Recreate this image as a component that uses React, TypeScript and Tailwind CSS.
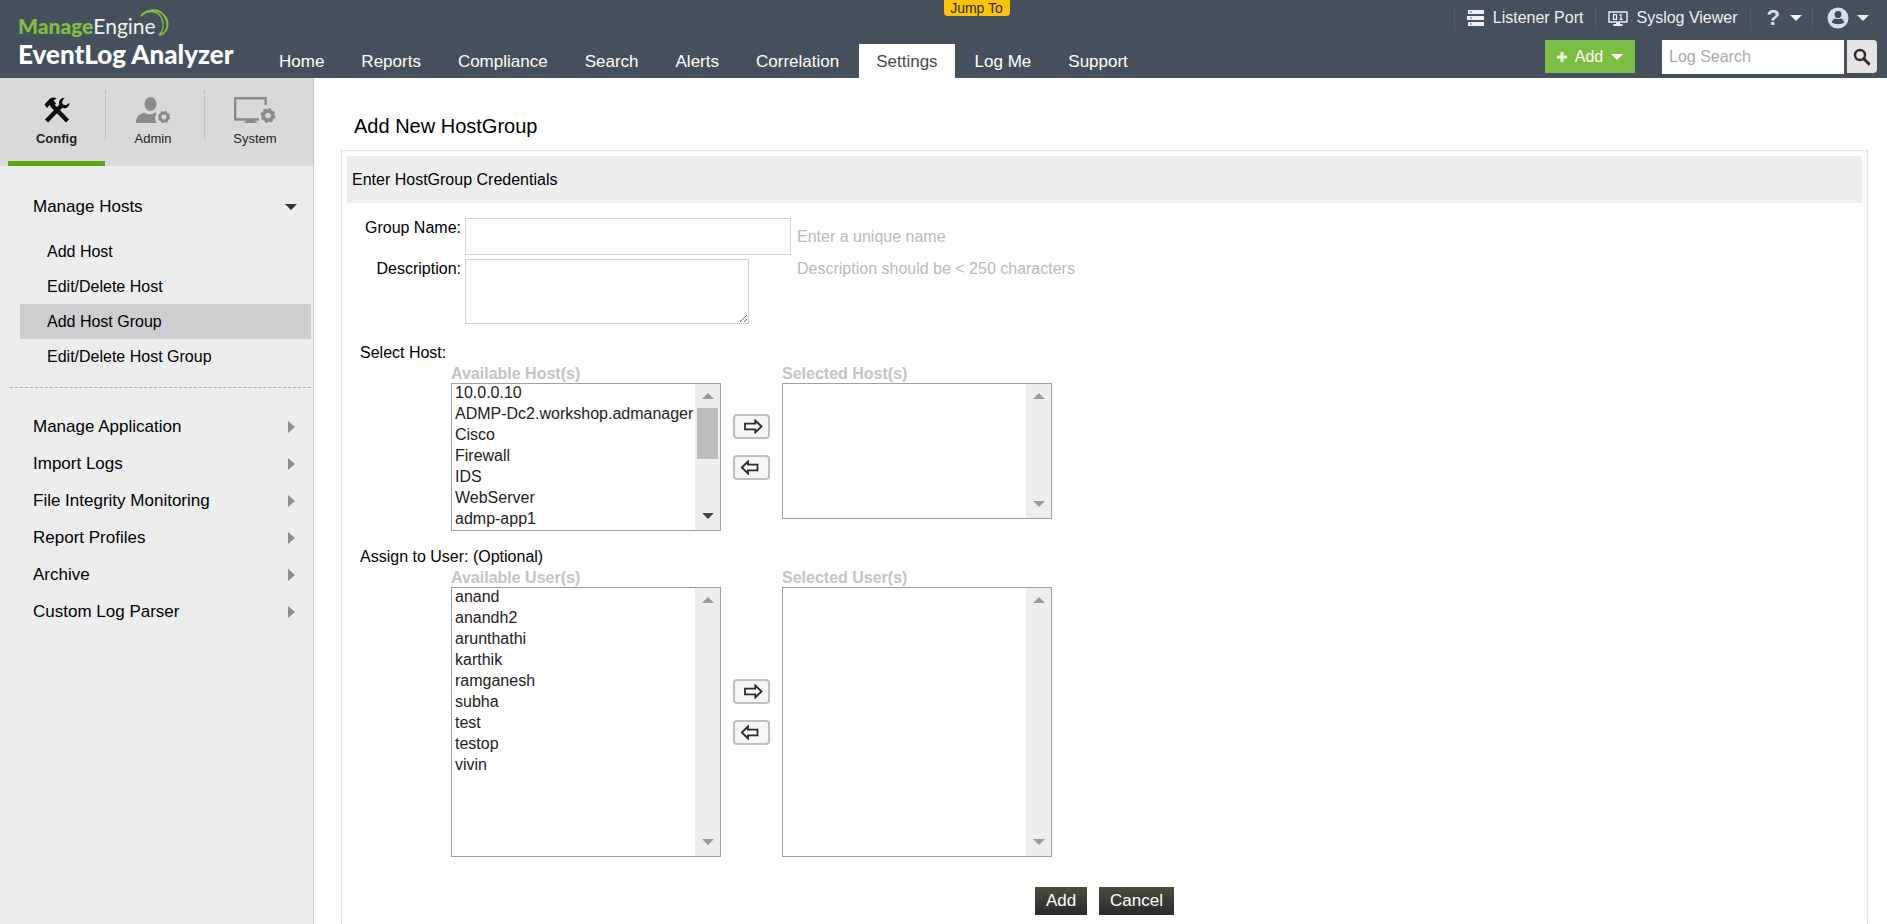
import React, { useState } from 'react';

const NAV_ITEMS = ['Home', 'Reports', 'Compliance', 'Search', 'Alerts', 'Correlation', 'Settings', 'Log Me', 'Support'];
const HOST_LINKS = ['Add Host', 'Edit/Delete Host', 'Add Host Group', 'Edit/Delete Host Group'];
const MENU_LINKS = ['Manage Application', 'Import Logs', 'File Integrity Monitoring', 'Report Profiles', 'Archive', 'Custom Log Parser'];
const HOSTS = ['10.0.0.10', 'ADMP-Dc2.workshop.admanager', 'Cisco', 'Firewall', 'IDS', 'WebServer', 'admp-app1', 'admp-app2', 'admp-dc1', 'admp-dc3', 'admp-sql'];
const USERS = ['anand', 'anandh2', 'arunthathi', 'karthik', 'ramganesh', 'subha', 'test', 'testop', 'vivin'];

function Caret({ className }: { className?: string }) {
  return (
    <svg width="12" height="6" viewBox="0 0 12 6" fill="currentColor" className={className} aria-hidden="true">
      <path d="M0 0h12L6 6z" />
    </svg>
  );
}

function ToolsIcon() {
  return (
    <svg width="26" height="26" viewBox="0 0 26 26" fill="none" stroke="#0b0b0b" aria-hidden="true">
      <path d="M8 8l15.500 16" strokeWidth="4.400" />
      <path d="M0.500 7.500L6 1.500C8 .2 10.500 .2 12.500 1.500L9.500 3.500l2.500 3L8 10.500 5.500 8 3 11z" fill="#0b0b0b" stroke="none" />
      <path d="M2.500 24L17.500 8.500" strokeWidth="4.400" />
      <path d="M20.500 .8c-3.600 0-6.200 3.200-5.300 6.700.8 2.800 3.500 4.300 6.200 3.700 2.500-.6 4.200-2.800 4.100-5.400L22 8.200l-3.200-.8-.6-3.200z" fill="#0b0b0b" stroke="none" />
    </svg>
  );
}

function AdminIcon() {
  return (
    <svg width="34" height="26" viewBox="0 0 34 26" fill="#8b8b8b" aria-hidden="true">
      <ellipse cx="14.500" cy="7" rx="6" ry="7" />
      <path d="M0 26c0-6 2.500-9 8.500-10.500 1.500 1.200 3 1.800 5 1.800 2.200 0 4-.6 5.500-1.800l1.500.5c-1.800 3-1.800 7 0 10z" />
      <circle cx="28" cy="20" r="4" fill="none" stroke="#8b8b8b" strokeWidth="3" />
      <circle cx="28" cy="20" r="5.600" fill="none" stroke="#8b8b8b" strokeWidth="1.200" strokeDasharray="2.200 2.198" />
    </svg>
  );
}

function SystemIcon() {
  return (
    <svg width="42" height="26" viewBox="0 0 42 26" fill="none" stroke="#8b8b8b" aria-hidden="true">
      <path d="M25 22.500H1.200V1.200h30.500V8" strokeWidth="2.400" />
      <path d="M10.500 26c0-1.800 1.500-2 3-2v-1.500h6V24c2 0 3.500.4 3.500 2z" fill="#8b8b8b" stroke="none" />
      <circle cx="34" cy="18.500" r="4.600" strokeWidth="3.600" />
      <circle cx="34" cy="18.500" r="6.600" strokeWidth="1.800" strokeDasharray="3 2.184" />
    </svg>
  );
}

function ServerIcon() {
  return (
    <svg width="18" height="16" viewBox="0 0 18 16" aria-hidden="true">
      <path d="M1 0h16v4H1zM0 6h17v4H0zM1 12h16v4H1z" fill="#eef0f1" />
      <path d="M3 1.500h2v1H3zM3 7.500h2v1H3zM3 13.500h2v1H3z" fill="#44515c" />
    </svg>
  );
}

function SyslogIcon() {
  return (
    <svg width="20" height="15" viewBox="0 0 20 15" fill="none" stroke="#eef0f1" aria-hidden="true">
      <path d="M1 1h18v10H1z" strokeWidth="1.400" />
      <path d="M5.500 3.700h3v4.600h-3zM11.500 4.200l1.500-.8v5M11.500 8.400h3.200" strokeWidth="1.200" />
      <path d="M8 11.500h4V13h2.500v2h-9v-2H8z" fill="#eef0f1" stroke="none" />
    </svg>
  );
}

function UserIcon() {
  return (
    <svg width="22" height="22" viewBox="0 0 22 22" aria-hidden="true">
      <circle cx="11" cy="11" r="10.500" fill="#d5dfe6" />
      <circle cx="11" cy="7.500" r="3.400" fill="#3f4e5b" />
      <path d="M4.800 15.500c.4-2.700 2.400-4 4-4 1.300.8 3 .8 4.400 0 1.600 0 3.600 1.300 4 4-3.200 2.200-9.200 2.200-12.400 0z" fill="#3f4e5b" />
    </svg>
  );
}

function Header() {
  return (
    <header className="relative flex h-[78px] shrink-0 bg-[#44515c] text-white">
      <a href="#" className="flex w-[262px] shrink-0 flex-col pl-[18px] pt-[13px]">
        <span className="relative font-['Lato',sans-serif] text-[21px] leading-[26px] text-[#f2f2f2]">
          <b className="font-black text-[#7fc142]">Manage</b>Engine
          <svg className="absolute -top-1 left-[122px]" width="30" height="28" viewBox="0 0 30 28" fill="none" stroke="#7fc142" aria-hidden="true">
            <path d="M1 7C7-1 20-1 25 8s1 16-5 18" strokeWidth="1.600" />
            <path d="M2 6C9 0 19 2 22 10s0 13-3 16" strokeWidth="1.300" />
            <path d="M4 4c8-5 20-2 23 6s-1 14-7 16" strokeWidth="1" />
          </svg>
        </span>
        <span className="whitespace-nowrap font-['Lato',sans-serif] text-[26px] font-black leading-[30px]">EventLog Analyzer</span>
      </a>

      <nav className="flex items-end gap-[3px] text-[17px]">
        {NAV_ITEMS.map((item) => (
          <a
            key={item}
            href="#"
            className={`h-[34px] whitespace-nowrap px-[17px] leading-9 ${item === 'Settings' ? 'bg-white text-[#4a4a4a]' : 'text-white'}`}
          >
            {item}
          </a>
        ))}
      </nav>

      <button className="absolute left-1/2 top-0 h-4 w-[66px] rounded-b bg-[#fdc30a] text-sm leading-4 text-[#2a2a2a]">Jump To</button>

      <div className="ml-auto flex shrink-0 flex-col items-end pr-2.5">
        <div className="flex h-10 items-start pt-1.5 text-[16px] text-[#f1f1f1]">
          <a href="#" className="flex h-6 items-center gap-2 border-l border-[#53606b] px-3">
            <ServerIcon />
            Listener Port
          </a>
          <a href="#" className="flex h-6 items-center gap-2 border-l border-[#53606b] px-3">
            <SyslogIcon />
            Syslog Viewer
          </a>
          <button aria-label="Help" className="flex h-6 items-center gap-2.5 border-l border-[#53606b] pl-4 pr-2.5">
            <span className="text-[22px] font-bold leading-6 text-[#dde1e4]">?</span>
            <Caret />
          </button>
          <button aria-label="Account" className="flex h-6 items-center gap-2 border-l border-[#53606b] pl-3.5 pr-2">
            <UserIcon />
            <Caret />
          </button>
        </div>
        <div className="flex items-start text-[16px]">
          <button className="mr-[27px] flex h-[33px] w-[90px] items-center justify-center gap-2 bg-[#7dbd43]">
            <svg width="10" height="10" viewBox="0 0 10 10" fill="#e6f2da" aria-hidden="true">
              <path d="M3.500 0h3v3.500H10v3H6.500V10h-3V6.500H0v-3h3.500z" />
            </svg>
            Add
            <Caret />
          </button>
          <input type="search" aria-label="Log Search" placeholder="Log Search" className="mr-[3px] h-[34px] w-[182px] bg-white px-[7px] text-black outline-none placeholder:text-[#aaaaaa]" />
          <button aria-label="Search" className="flex h-[33px] w-[30px] items-center justify-center rounded-r bg-[#e4e4e4]">
            <svg width="18" height="18" viewBox="0 0 18 18" fill="none" stroke="#33282b" aria-hidden="true">
              <circle cx="7" cy="7" r="5" strokeWidth="2.400" />
              <path d="M10.800 10.800l5 5" strokeWidth="3" strokeLinecap="round" />
            </svg>
          </button>
        </div>
      </div>
    </header>
  );
}

function Sidebar() {
  return (
    <aside className="w-[314px] shrink-0 border-r border-[#c9cccc] bg-[#eceeee]">
      <div className="flex h-[88px] bg-[#d9d9d9] pl-2 text-[13px] text-[#222222]">
        <button className="flex w-[97px] flex-col items-center border-b-[5px] border-[#57a80e] pt-[19px] font-bold">
          <ToolsIcon />
          <span className="mt-1.5 leading-5">Config</span>
        </button>
        <div className="mt-3 h-[49px] border-l border-dotted border-[#a8a8a8]" />
        <button className="flex w-[98px] flex-col items-center pr-1 pt-[19px]">
          <AdminIcon />
          <span className="mt-1.5 leading-5">Admin</span>
        </button>
        <div className="mt-3 h-[49px] border-l border-dotted border-[#a8a8a8]" />
        <button className="flex w-[100px] flex-col items-center pt-[19px]">
          <SystemIcon />
          <span className="mt-1.5 leading-5">System</span>
        </button>
      </div>

      <nav className="pt-[22px] text-black">
        <a href="#" className="flex h-[37px] items-center justify-between pl-[33px] pr-4 text-[17px]">
          Manage Hosts
          <Caret className="text-[#333333]" />
        </a>
        <div className="mb-[13px] ml-[10px] mr-0.5 border-b border-dashed border-[#a9adad] pb-[13px] pt-[9px] text-[16px]">
          {HOST_LINKS.map((link) => (
            <a
              key={link}
              href="#"
              className={`ml-[10px] flex h-[35px] items-center pl-[27px] ${link === 'Add Host Group' ? 'bg-[#cbcfd0]' : ''}`}
            >
              {link}
            </a>
          ))}
        </div>
        <div className="pt-[7px]">
          {MENU_LINKS.map((link) => (
            <a key={link} href="#" className="flex h-[37px] items-center justify-between pl-[33px] pr-[18px] text-[17px]">
              {link}
              <svg width="7" height="12" viewBox="0 0 7 12" fill="#8c8c8c" aria-hidden="true">
                <path d="M0 0l7 6-7 6z" />
              </svg>
            </a>
          ))}
        </div>
      </nav>
    </aside>
  );
}

interface ListBoxProps {
  id: string;
  label: string;
  options: string[];
  heightClass: string;
  scrollable?: boolean;
}

function ListBox({ id, label, options, heightClass, scrollable }: ListBoxProps) {
  return (
    <div className="w-[270px]">
      <label htmlFor={id} className="flex h-[21px] items-end font-bold leading-[18px] text-[#c3c3c3]">
        {label}
      </label>
      <div className={`flex border border-[#9aa39a] bg-white ${heightClass}`}>
        <select
          id={id}
          multiple
          className="h-full min-w-0 flex-1 overflow-x-hidden overflow-y-auto border-0 bg-white p-0 text-[#222222] outline-none [scrollbar-width:none]"
        >
          {options.map((option) => (
            <option key={option} className="h-[21px] px-[3px] py-0 leading-[21px]">
              {option}
            </option>
          ))}
        </select>
        <div className="flex w-[25px] flex-col items-center justify-between bg-[#eeeeee]" aria-hidden="true">
          <div className="flex flex-col items-center">
            <Caret className="my-[9px] rotate-180 text-[#9b9b9b]" />
            {scrollable && <div className="h-[51px] w-[21px] bg-[#bdbdbd]" />}
          </div>
          <Caret className={`mb-[11px] ${scrollable ? 'text-[#444444]' : 'text-[#9b9b9b]'}`} />
        </div>
      </div>
    </div>
  );
}

function MoveButton({ label, back }: { label: string; back?: boolean }) {
  return (
    <button aria-label={label} className="flex h-[25px] w-[37px] items-center justify-center rounded border-2 border-[#bfbfbf] bg-[#f6f6f6]">
      <svg width="22" height="15" viewBox="0 0 22 15" fill="#ffffff" stroke="#2b2b2b" strokeWidth="1.800" aria-hidden="true">
        {back ? <path d="M0.800 7.500L7 1.500v3.200h9.500v5.600H7v3.200z" /> : <path d="M20.500 7.500L14.300 1.500v3.200H4v5.600h10.300v3.200z" />}
      </svg>
    </button>
  );
}

interface TransferProps {
  name: string;
  available: string[];
  availableHeight: string;
  selectedHeight: string;
  scrollable?: boolean;
}

function Transfer({ name, available, availableHeight, selectedHeight, scrollable }: TransferProps) {
  return (
    <div className="flex gap-3 pl-[109px]">
      <ListBox id={`available-${name}`} label={`Available ${name}(s)`} options={available} heightClass={availableHeight} scrollable={scrollable} />
      <div className="flex flex-col justify-center gap-4">
        <MoveButton label={`Add ${name}`} />
        <MoveButton label={`Remove ${name}`} back />
      </div>
      <ListBox id={`selected-${name}`} label={`Selected ${name}(s)`} options={[]} heightClass={selectedHeight} />
    </div>
  );
}

export default function App() {
  const [groupName, setGroupName] = useState('');
  const [description, setDescription] = useState('');

  return (
    <div className="flex min-h-screen flex-col bg-white font-['Liberation_Sans',Arial,sans-serif] text-[16px] leading-5 text-black">
      <Header />
      <div className="flex flex-1">
        <Sidebar />

        <main className="flex flex-1 flex-col pl-[27px] pr-[19px] pt-9">
          <h1 className="mb-3 pl-[13px] text-[20px] leading-6">Add New HostGroup</h1>

          <form className="flex-1 border border-b-0 border-dotted border-[#cfcfcf]" onSubmit={(e) => e.preventDefault()}>
            <h2 className="mx-[5px] mt-[5px] flex h-[47px] items-center bg-[#eceeee] pl-[5px]">Enter HostGroup Credentials</h2>

            <div className="mt-[15px] grid grid-cols-[119px_326px_1fr] gap-1">
              <label htmlFor="group-name" className="text-right">Group Name:</label>
              <input
                id="group-name"
                value={groupName}
                onChange={(e) => setGroupName(e.target.value)}
                className="h-[37px] w-full border border-[#d3d3d3] px-2 outline-none"
              />
              <span className="self-center pl-0.5 text-[#b9b9b9]">Enter a unique name</span>

              <label htmlFor="description" className="text-right">Description:</label>
              <textarea
                id="description"
                value={description}
                onChange={(e) => setDescription(e.target.value)}
                className="h-[65px] w-[284px] border border-[#d3d3d3] px-2 outline-none"
              />
              <span className="pl-0.5 text-[#b9b9b9]">Description should be &lt; 250 characters</span>
            </div>

            <p className="mt-5 pl-[18px] leading-[18px]">Select Host:</p>
            <Transfer name="Host" available={HOSTS} availableHeight="h-[148px]" selectedHeight="h-[136px]" scrollable />

            <p className="mt-[17px] pl-[18px] leading-[18px]">Assign to User: (Optional)</p>
            <Transfer name="User" available={USERS} availableHeight="h-[270px]" selectedHeight="h-[270px]" />

            <div className="mt-[30px] flex justify-center gap-3 text-[17px] text-white">
              <button type="submit" className="h-7 w-[52px] bg-linear-to-b from-[#494e3a] to-[#2a2a2b]">Add</button>
              <button type="button" className="h-7 w-[75px] bg-linear-to-b from-[#494e3a] to-[#2a2a2b]">Cancel</button>
            </div>
          </form>
        </main>
      </div>
    </div>
  );
}
